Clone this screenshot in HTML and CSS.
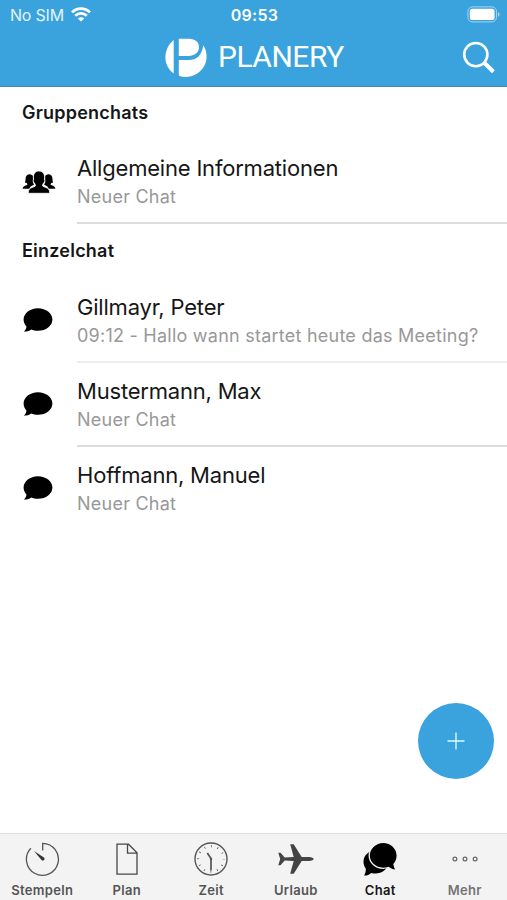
FILE: index.html
```html
<!DOCTYPE html>
<html lang="de">
<head>
<meta charset="utf-8">
<title>Planery Chat</title>
<link rel="stylesheet" href="styles.css">
</head>
<body>
<div class="app">
  <header class="header">
    <div class="status">
      <div class="carrier"><span class="carrier-name">No SIM</span>
        <svg class="wifi" width="20" height="15" viewBox="0 0 20 15" fill="none" stroke="#fff" stroke-width="2.7"><path d="M1 5.4C6 .4 14 .4 19 5.4M4.2 8.8c3.3-3.2 8.3-3.2 11.6 0"/><path d="M10 14.6 6.8 11.4c1.8-1.7 4.6-1.7 6.4 0z" fill="#fff" stroke="none"/></svg>
      </div>
      <span class="time">09:53</span>
      <svg class="battery" width="34" height="17" viewBox="0 0 34 17"><rect x=".9" y=".9" width="28.6" height="15" rx="4.5" fill="none" stroke="#a5d5f1" stroke-width="1"/><rect x="2.8" y="2.8" width="24.8" height="11.2" rx="2.6" fill="#fff"/><path d="M31 6c2 .7 2 4.100 0 4.800z" fill="#a5d5f1"/></svg>
    </div>
    <div class="bar">
      <div class="brand">
        <svg class="logo" width="42" height="40" viewBox="0 0 42 40" fill="#fff"><path d="M8.700 2v33.500C3.500 31.500.4 26 .4 19.500S3.500 6 8.700 2zM13.800.7H24c6.500 0 10 3.600 10 8.300 0 5.400-4.200 8.900-10.500 8.900h-9.700zM13.800 22h10c7.500 0 12.900-4 14.500-14.800 2.300 3.600 3.300 7.400 3.300 11.300C41.600 30 32 38.900 21 38.900c-2.500 0-5-.5-7.200-1.500z"/></svg>
        <span class="wordmark">PLANERY</span>
      </div>
      <svg class="search" width="34" height="34" viewBox="0 0 34 34" fill="none" stroke="#fff"><circle cx="13.800" cy="13.600" r="11.600" stroke-width="2.600"/><path d="m22.200 21.800 9.200 9" stroke-width="4"/></svg>
    </div>
  </header>

  <main class="content">
    <h2 class="section">Gruppenchats</h2>
    <div class="row group">
      <svg class="icon" width="34" height="24" viewBox="0 0 34 24"><path d="M.6 17.800c.3-2.600 2.200-3 4.600-3.900.4-.7-.2-1.300-.8-2.100-.5.1-1.100.1-1.500-.2.500-.9.600-2 .6-3.300C3.600 5 5.300 3.300 7.600 3.300c1.400 0 2.600.7 3.300 1.800v6.400c.5.800.9 1.500 1.100 2.200-2.500.8-3.900 2.100-4.700 4.100z"/><path d="M33.400 17.800c-.3-2.600-2.200-3-4.600-3.900-.4-.7.200-1.300.8-2.100.5.1 1.100.1 1.500-.2-.5-.9-.6-2-.6-3.300 0-3.300-1.700-5-4-5-1.400 0-2.600.7-3.300 1.800v6.400c-.5.800-.9 1.500-1.100 2.200 2.500.8 3.900 2.100 4.700 4.100z"/><path stroke="#fff" stroke-width=".8" d="M6.300 22.300c0-4.200 1.600-5 4.500-6.100 1.700-.6 2.700-.9 2.700-1.700 0-1-.8-1.600-1.200-2.700-1-.2-1.400-2.500-.7-3.200-.8-5.400 1.400-8.600 5.400-8.600s6.200 3.200 5.400 8.600c.7.700.3 3-.7 3.200-.4 1.100-1.200 1.700-1.200 2.700 0 .8 1 1.100 2.700 1.700 2.900 1.100 4.500 1.900 4.500 6.100z"/></svg>
      <div class="text"><div class="name">Allgemeine Informationen</div><div class="sub">Neuer Chat</div></div>
    </div>
    <h2 class="section second">Einzelchat</h2>
    <div class="row light">
      <svg class="icon" width="34" height="26" viewBox="0 0 34 26"><path d="M17 1.200c8 0 14.400 5 14.400 11.300S25 23.800 17 23.800c-2.500 0-4.800-.5-6.800-1.400-2 1.500-4.300 2.200-7.400 2.200 1.700-1.300 2.500-3 2.700-5C3.700 17.600 2.600 15.200 2.600 12.500 2.600 6.200 9 1.200 17 1.200z"/></svg>
      <div class="text"><div class="name">Gillmayr, Peter</div><div class="sub">09:12 - Hallo wann startet heute das Meeting?</div></div>
    </div>
    <div class="row">
      <svg class="icon" width="34" height="26" viewBox="0 0 34 26"><path d="M17 1.200c8 0 14.400 5 14.400 11.300S25 23.800 17 23.800c-2.500 0-4.800-.5-6.800-1.400-2 1.500-4.300 2.200-7.400 2.200 1.700-1.300 2.500-3 2.700-5C3.700 17.600 2.600 15.200 2.600 12.500 2.600 6.200 9 1.200 17 1.200z"/></svg>
      <div class="text"><div class="name">Mustermann, Max</div><div class="sub">Neuer Chat</div></div>
    </div>
    <div class="row last">
      <svg class="icon" width="34" height="26" viewBox="0 0 34 26"><path d="M17 1.200c8 0 14.400 5 14.400 11.300S25 23.800 17 23.800c-2.500 0-4.800-.5-6.800-1.400-2 1.500-4.300 2.200-7.400 2.200 1.700-1.300 2.500-3 2.700-5C3.700 17.600 2.600 15.200 2.600 12.500 2.600 6.200 9 1.200 17 1.200z"/></svg>
      <div class="text"><div class="name">Hoffmann, Manuel</div><div class="sub">Neuer Chat</div></div>
    </div>
    <button class="fab" aria-label="Neuer Chat"><svg width="18" height="18" viewBox="0 0 18 18" stroke="#d9fbfa" stroke-width="1.400"><path d="M.5 9h17M9 .5v17"/></svg></button>
  </main>

  <nav class="tabs">
    <div class="tab"><svg width="36" height="36" viewBox="0 0 36 36" fill="none" stroke="#555" stroke-width="1.300"><path d="M18.700 9.500V2.300A16 16 0 1 1 6.900 7.200"/><path d="m10 10 9.900 6.400c1.900 1.700-.7 4.300-2.400 2.500z" fill="#333" stroke="none"/></svg><span>Stempeln</span></div>
    <div class="tab"><svg width="36" height="36" viewBox="0 0 36 36" fill="none" stroke="#484848" stroke-width="1.300"><path d="M8 3.200h11.500l8.500 8.500v21.500H8zM18.500 3.200v9H28"/></svg><span>Plan</span></div>
    <div class="tab"><svg width="36" height="36" viewBox="0 0 36 36" fill="none" stroke="#555" stroke-width="1.400"><circle cx="18" cy="18" r="16"/><circle cx="18" cy="18" r="12.800" stroke-width="2" stroke-dasharray=".8 5.902" stroke-dashoffset=".4"/><path d="M14.300 12 18 17.500V29.500" stroke-width="1.700"/><circle cx="18" cy="18" r="1.200" fill="#555" stroke="none"/></svg><span>Zeit</span></div>
    <div class="tab"><svg width="36" height="36" viewBox="0 0 36 36" fill="#444"><path d="M.3 11.800h2.200l4.200 4.700 9 -.6L12.200 3.300h3.500l8 12.600h7.500c2.500.3 4.500 1.200 4.500 2.100s-2 1.800-4.500 2.100h-7.500l-8 12.600h-3.500l3.500-12.600-9-.6-4.200 4.700H.3l1.900-6.200z"/></svg><span>Urlaub</span></div>
    <div class="tab active"><svg width="36" height="36" viewBox="0 0 36 36"><path d="M14 9.500C6.800 9.500 1.500 14 1.500 21c0 2.600.9 4.800 2.300 6.600.2 2.500-.4 4.700-1.700 6.900 3.200 0 5.300-.9 7.200-2.600 7.500 2.400 16-2 17-9.400z"/><path stroke="#f4f3f4" stroke-width="1.300" d="M21.200 1.400c7.800 0 14 5.900 14 13.200 0 3.800-1.200 6.500-3.200 8.700.3 2.500 1.100 4.300 2.700 6-3.500 0-6.200-1-8.200-2.800-1.700.5-3.400.8-5.300.8-7.800 0-14-5.700-14-12.700S13.400 1.400 21.200 1.400z"/></svg><span>Chat</span></div>
    <div class="tab"><svg width="36" height="36" viewBox="0 0 36 36" fill="none" stroke="#666" stroke-width="1.200"><circle cx="7.900" cy="18" r="1.900"/><circle cx="18" cy="18" r="1.900"/><circle cx="28.100" cy="18" r="1.900"/></svg><span class="more">Mehr</span></div>
  </nav>
</div>
</body>
</html>
```

FILE: styles.css
```css
* { box-sizing: border-box; }
body { margin: 0; background: #fff; font-family: Inter, "Liberation Sans", sans-serif; color: #161616; }
.app { width: 507px; height: 900px; display: flex; flex-direction: column; overflow: hidden; }

.header { height: 87px; background: #3aa2dd; border-bottom: 1px solid #4585ae; color: #fff; flex: none; }
.status { height: 29px; display: grid; grid-template-columns: 1fr auto 1fr; align-items: center; padding: 0 6px 0 10px; }
.carrier { display: flex; align-items: center; gap: 7px; }
.carrier-name { font-size: 16px; line-height: 20px; color: #e4f5ff; letter-spacing: -.2px; }
.time { font-size: 16px; line-height: 20px; font-weight: 600; letter-spacing: .3px; margin-left: -2px; }
.battery { justify-self: end; margin-top: -1px; }
.bar { height: 57px; display: flex; justify-content: space-between; align-items: center; padding: 0 11px 0 165px; }
.brand { display: flex; align-items: center; gap: 11px; }
.wordmark { font-family: Roboto, sans-serif; font-size: 30px; line-height: 36px; letter-spacing: -.5px; margin-top: -2px; }

.content { flex: 1; position: relative; }
.section { margin: 0; height: 53px; padding: 15px 0 0 22px; font-size: 18px; line-height: 22px; font-weight: 600; letter-spacing: .22px; }
.second { height: 55px; padding-top: 16px; }
.row { height: 84px; display: flex; align-items: center; padding-left: 22px; gap: 21px; }
.icon { flex: none; margin-top: -3px; margin-left: -1px; margin-right: 1px; }
.group .icon { margin-left: 0; margin-right: 0; margin-top: 2px; }
.text { flex: 1; align-self: stretch; padding-top: 13px; border-bottom: 2px solid #dcdcdc; white-space: nowrap; }
.light .text { border-color: #ececec; }
.last .text { border: 0; }
.name { font-size: 22px; line-height: 30px; letter-spacing: -.2px; }
.sub { font-size: 18px; line-height: 27px; color: #989898; letter-spacing: .24px; }
.fab { position: absolute; right: 13px; bottom: 54px; width: 76px; height: 76px; border: 0; border-radius: 50%; background: #3aa2dd; display: grid; place-items: center; padding: 0; }

.tabs { height: 67px; flex: none; display: grid; grid-template-columns: repeat(6, 1fr); background: #f4f3f4; border-top: 1px solid #dedede; }
.tab { display: flex; flex-direction: column; align-items: center; padding-top: 7px; font-size: 13px; line-height: 16px; font-weight: 600; color: #555; letter-spacing: .3px; }
.tab svg { flex: none; }
.tab span { padding-top: 5px; }
.active { color: #161616; }
.tab .more { color: #757575; }
```
